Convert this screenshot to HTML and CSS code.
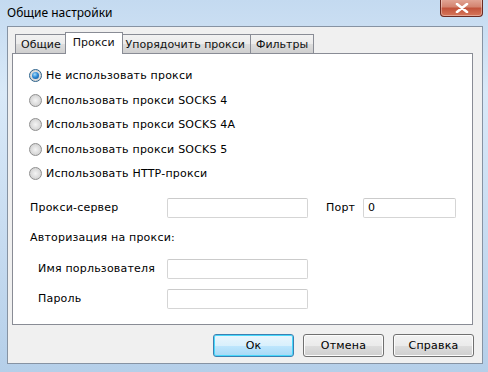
FILE: index.html
```html
<!DOCTYPE html>
<html>
<head>
<meta charset="utf-8">
<link rel="stylesheet" href="styles.css">
</head>
<body>
<div class="window">
  <div class="titlebar">
    <span class="title">Общие настройки</span>
    <button class="close" aria-label="Закрыть">
      <svg width="14" height="10" viewBox="0 0 14 10"><path d="M2 1 L12 9 M12 1 L2 9" stroke="#fff" stroke-width="2.6" stroke-linecap="round"/></svg>
    </button>
  </div>
  <div class="client">
    <div class="tabs">
      <div class="tab first">Общие</div>
      <div class="tab active">Прокси</div>
      <div class="tab">Упорядочить прокси</div>
      <div class="tab">Фильтры</div>
    </div>
    <div class="panel">
      <div class="radios">
        <label class="radio"><span class="dot checked"></span>Не использовать прокси</label>
        <label class="radio"><span class="dot"></span>Использовать прокси SOCKS 4</label>
        <label class="radio"><span class="dot"></span>Использовать прокси SOCKS 4A</label>
        <label class="radio"><span class="dot"></span>Использовать прокси SOCKS 5</label>
        <label class="radio"><span class="dot"></span>Использовать HTTP-прокси</label>
      </div>
      <div class="row server">
        <span class="lbl">Прокси-сервер</span>
        <span class="input wide"></span>
        <span class="port-lbl">Порт</span>
        <span class="input port">0</span>
      </div>
      <div class="auth">Авторизация на прокси:</div>
      <div class="row sub user">
        <span class="lbl sublbl">Имя порльзователя</span>
        <span class="input wide"></span>
      </div>
      <div class="row sub pass">
        <span class="lbl sublbl">Пароль</span>
        <span class="input wide"></span>
      </div>
    </div>
    <div class="buttons">
      <button class="btn default">Ок</button>
      <button class="btn">Отмена</button>
      <button class="btn">Справка</button>
    </div>
  </div>
</div>
</body>
</html>
```

FILE: styles.css
```css
html, body {
  margin: 0;
  padding: 0;
  background: #fff;
}
.window {
  width: 488px;
  height: 372px;
  box-sizing: border-box;
  background: linear-gradient(180deg, #c4daf0 0%, #d9e9f8 25%, #c9ddf1 60%, #b5cfe9 100%);
  display: flex;
  flex-direction: column;
  font-family: "DejaVu Sans", Verdana, sans-serif;
  font-size: 11px;
  color: #000;
  position: relative;
}
.titlebar {
  height: 26px;
  display: flex;
  align-items: flex-start;
  justify-content: space-between;
}
.title {
  font-family: "Noto Sans", "Open Sans", sans-serif;
  font-size: 12px;
  margin: 4px 0 0 7px;
  color: #000;
}
.close {
  width: 43px;
  height: 18px;
  margin: -1px 5px 0 0;
  padding: 0;
  border: 1px solid #6b2a22;
  border-top: none;
  border-radius: 0 0 4px 4px;
  background: linear-gradient(180deg, #e3a899 0%, #d48571 45%, #c2543c 55%, #d7765a 100%);
  box-shadow: inset 0 0 0 1px rgba(255,255,255,0.35);
  display: flex;
  align-items: center;
  justify-content: center;
}
.client {
  margin: 0 5px 8px 7px;
  flex: 1;
  border: 1px solid #8693a3;
  background: #f0f0f0;
  display: flex;
  flex-direction: column;
}
.tabs {
  display: flex;
  align-items: flex-end;
  height: 26px;
  padding-left: 7px;
  position: relative;
  z-index: 1;
}
.tab {
  height: 19px;
  box-sizing: border-box;
  border: 1px solid #898c95;
  border-bottom: none;
  margin-left: -1px;
  padding: 0 5px;
  display: flex;
  align-items: center;
  background: linear-gradient(180deg, #f2f2f2 0%, #ebebeb 50%, #dddddd 51%, #cfcfcf 100%);
  color: #111;
}
.tab.first { margin-left: 0; }
.tab.active {
  height: 22px;
  background: #fff;
  padding: 0 7px 3px;
  margin: 0 -2px -1px -2px;
  position: relative;
  z-index: 2;
}
.panel {
  margin: 0 9px 0 4px;
  height: 272px;
  box-sizing: border-box;
  border: 1px solid #898c95;
  background: #fff;
  padding: 15px 0 0 16px;
  display: flex;
  flex-direction: column;
  letter-spacing: 0.2px;
}
.radios {
  display: flex;
  flex-direction: column;
  gap: 11px;
}
.radio {
  display: flex;
  align-items: center;
  height: 13.5px;
  gap: 4px;
}
.dot {
  width: 11px;
  height: 11px;
  border-radius: 50%;
  border: 1px solid #8f8f8f;
  background: radial-gradient(circle at 50% 50%, #f4f4f4 0%, #d9d9d9 60%, #c8c8c8 100%);
  box-sizing: content-box;
  display: inline-block;
  position: relative;
}
.dot.checked {
  border-color: #2c628b;
}
.dot.checked::after {
  content: "";
  position: absolute;
  left: 2px;
  top: 2px;
  width: 7px;
  height: 7px;
  border-radius: 50%;
  background: radial-gradient(circle at 40% 35%, #a8dcf7 0%, #2e8ad8 45%, #0d4a86 100%);
}
.row {
  display: flex;
  align-items: center;
}
.server {
  margin-top: 17px;
}
.lbl {
  width: 137px;
  padding-left: 1px;
}
.sublbl {
  width: 129px;
  padding-left: 9px;
}
.input {
  height: 20px;
  box-sizing: border-box;
  border: 1px solid #d5d5d5;
  border-top-color: #cbcbcb;
  border-radius: 2px;
  background: #fff;
  display: inline-flex;
  align-items: center;
  padding-left: 4px;
}
.wide { width: 141px; }
.port-lbl { margin-left: 18px; width: 37px; }
.port { width: 93px; }
.auth {
  margin-top: 13px;
  padding-left: 1px;
  height: 14px;
}
.user { margin-top: 14px; }
.pass { margin-top: 10px; }
.buttons {
  display: flex;
  justify-content: flex-end;
  gap: 9px;
  padding: 9px 8px 0 0;
}
.btn {
  width: 81px;
  height: 23px;
  box-sizing: border-box;
  font-family: "DejaVu Sans", Verdana, sans-serif;
  font-size: 11px;
  letter-spacing: 0.2px;
  color: #000;
  border: 1px solid #707070;
  border-radius: 3px;
  background: linear-gradient(180deg, #f2f2f2 0%, #ebebeb 50%, #dddddd 51%, #cfcfcf 100%);
  box-shadow: inset 0 0 0 1px #fcfcfc;
  padding: 0;
}
.btn.default {
  border-color: #3c7fb1;
  box-shadow: inset 0 0 0 1px #48d8fb;
  background: linear-gradient(180deg, #eaf6fd 0%, #d9f0fc 50%, #bee6fd 51%, #a7d9f5 100%);
}
```
